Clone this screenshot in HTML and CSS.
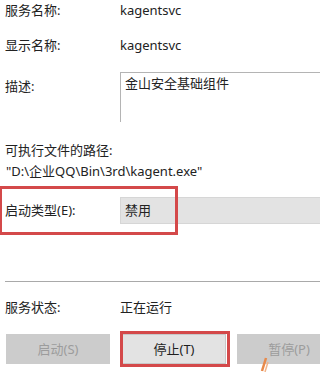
FILE: index.html
```html
<!DOCTYPE html>
<html lang="zh-CN">
<head>
<meta charset="utf-8">
<link rel="stylesheet" href="styles.css">
</head>
<body>
<div class="dialog">
  <div class="row r-name"><span class="label">服务名称:</span><span class="value">kagentsvc</span></div>
  <div class="row r-display"><span class="label">显示名称:</span><span class="value">kagentsvc</span></div>
  <div class="row r-desc"><span class="label desc-label">描述:</span><div class="desc-box">金山安全基础组件</div></div>
  <div class="path-title">可执行文件的路径:</div>
  <div class="path">"D:\企业QQ\Bin\3rd\kagent.exe"</div>
  <div class="row r-start">
    <span class="label start-label">启动类型(E):</span>
    <div class="combo">禁用</div>
    <div class="mark mark-start"></div>
  </div>
  <div class="sep"></div>
  <div class="row r-status"><span class="label">服务状态:</span><span class="value">正在运行</span></div>
  <div class="buttons">
    <div class="btn btn-off">启动(S)</div>
    <div class="btn btn-on">停止(T)<div class="mark mark-stop"></div></div>
    <div class="btn btn-off btn-third">暂停(P)</div>
  </div>
  <svg class="wm" width="10" height="16" viewBox="0 0 10 16"><path d="M7 2 L3 15" stroke="#e8894a" stroke-width="2.5" fill="none"/><path d="M9 6 L6 16" stroke="#f2b48a" stroke-width="1.5" fill="none"/></svg>
</div>
</body>
</html>
```
FILE: styles.css
```css
html, body {
  margin: 0;
  padding: 0;
  background: #ffffff;
  overflow: hidden;
}
body {
  font-family: "Noto Sans", "Noto Sans CJK SC", sans-serif;
  font-size: 13px;
  color: #222222;
}
.dialog {
  position: relative;
  padding-left: 5px;
  width: 380px;
  height: 372px;
}
.row {
  display: grid;
  grid-template-columns: 115px 1fr;
  line-height: 21px;
  white-space: nowrap;
}
.r-display { margin-top: 14px; }
.r-desc { margin-top: 16px; }
.desc-label { padding-top: 4px; }
.desc-box {
  height: 50px;
  border-top: 1px solid #b4b4b4;
  border-left: 1px solid #b4b4b4;
  padding: 2px 0 0 4px;
  line-height: 16px;
  box-sizing: border-box;
}
.path-title {
  margin-top: 18px;
  line-height: 21px;
}
.path {
  line-height: 21px;
  white-space: nowrap;
  padding-left: 1px;
}
.r-start {
  position: relative;
  margin-top: 15px;
  line-height: 27px;
}
.combo {
  height: 27px;
  background: #e3e3e3;
  border: 1px solid #d6d6d6;
  box-sizing: border-box;
  padding-left: 4px;
  line-height: 25px;
}
.mark {
  position: absolute;
  border: 3px solid #d4494a;
  box-sizing: border-box;
}
.mark-start {
  left: -6px;
  top: -11px;
  width: 179px;
  height: 49px;
}
.sep {
  margin-top: 57px;
  height: 1px;
  background: #a9a9a9;
}
.r-status { margin-top: 15px; }
.buttons {
  display: flex;
  gap: 12px;
  margin-top: 16px;
  padding-left: 1px;
}
.btn {
  position: relative;
  flex: 0 0 104px;
  height: 30px;
  line-height: 30px;
  text-align: center;
  box-sizing: border-box;
  white-space: nowrap;
}
.btn-off {
  background: #cccccc;
  color: #9c9c9c;
}
.btn-on {
  background: #e3e3e3;
  border: 1px solid #c8c8c8;
  line-height: 28px;
  color: #1e1e1e;
}
.btn-third { margin-left: -1px; }
.mark-stop {
  left: -3px;
  top: -4px;
  width: 110px;
  height: 36px;
}
.wm {
  position: absolute;
  left: 259px;
  top: 356px;
}
```
